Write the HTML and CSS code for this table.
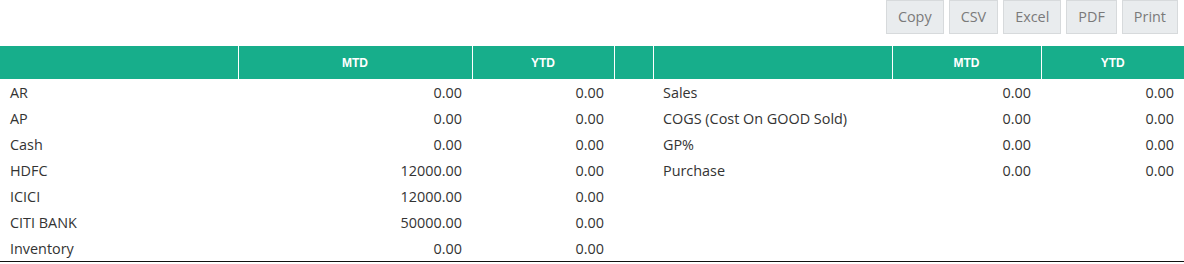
FILE: index.html
```html
<!DOCTYPE html>
<html>
<head>
<meta charset="utf-8">
<link rel="stylesheet" href="styles.css">
</head>
<body>
<div class="toolbar">
  <button class="btn">Copy</button>
  <button class="btn">CSV</button>
  <button class="btn">Excel</button>
  <button class="btn">PDF</button>
  <button class="btn">Print</button>
</div>
<table class="report">
  <colgroup>
    <col class="c-label"><col class="c-mtd"><col class="c-ytd"><col class="c-gap"><col class="c-label2"><col class="c-mtd2"><col class="c-ytd2">
  </colgroup>
  <thead>
    <tr><th></th><th>MTD</th><th>YTD</th><th></th><th></th><th>MTD</th><th>YTD</th></tr>
  </thead>
  <tbody>
    <tr><td>AR</td><td class="num">0.00</td><td class="num">0.00</td><td></td><td>Sales</td><td class="num">0.00</td><td class="num">0.00</td></tr>
    <tr><td>AP</td><td class="num">0.00</td><td class="num">0.00</td><td></td><td>COGS (Cost On GOOD Sold)</td><td class="num">0.00</td><td class="num">0.00</td></tr>
    <tr><td>Cash</td><td class="num">0.00</td><td class="num">0.00</td><td></td><td>GP%</td><td class="num">0.00</td><td class="num">0.00</td></tr>
    <tr><td>HDFC</td><td class="num">12000.00</td><td class="num">0.00</td><td></td><td>Purchase</td><td class="num">0.00</td><td class="num">0.00</td></tr>
    <tr><td>ICICI</td><td class="num">12000.00</td><td class="num">0.00</td><td></td><td></td><td></td><td></td></tr>
    <tr><td>CITI BANK</td><td class="num">50000.00</td><td class="num">0.00</td><td></td><td></td><td></td><td></td></tr>
    <tr><td>Inventory</td><td class="num">0.00</td><td class="num">0.00</td><td></td><td></td><td></td><td></td></tr>
  </tbody>
</table>
</body>
</html>
```
FILE: styles.css
```css
html, body {
  margin: 0;
  padding: 0;
  background: #fff;
}
body {
  font-family: "Open Sans", "Liberation Sans", sans-serif;
  font-size: 14.4px;
  color: #333;
}
.toolbar {
  display: flex;
  justify-content: flex-end;
  gap: 5px;
  padding: 0 6px 0 0;
  height: 46px;
  align-items: flex-start;
}
.btn {
  font-family: "Open Sans", "Liberation Sans", sans-serif;
  font-size: 14.4px;
  color: #7a7a7a;
  background: #e9ecee;
  border: 1px solid #d7dadc;
  border-radius: 0;
  height: 34px;
  padding: 0 11px;
  margin: 0;
  line-height: 32px;
}
.report {
  width: 1184px;
  border-collapse: collapse;
  table-layout: fixed;
  border-bottom: 1px solid #111;
}
.c-label { width: 238px; }
.c-mtd { width: 234px; }
.c-ytd { width: 142px; }
.c-gap { width: 39px; }
.c-label2 { width: 239px; }
.c-mtd2 { width: 149px; }
.c-ytd2 { width: 143px; }
.report th {
  background: #17ae8b;
  color: #fff;
  font-family: "Liberation Sans", Arial, sans-serif;
  font-weight: bold;
  font-size: 12px;
  height: 33px;
  padding: 0;
  text-align: center;
  border-left: 1px solid #fff;
}
.report th:first-child {
  border-left: none;
}
.report td {
  height: 25px;
  padding: 1px 10px 0;
  line-height: 25px;
  white-space: nowrap;
}
.report td.num {
  text-align: right;
}
```
